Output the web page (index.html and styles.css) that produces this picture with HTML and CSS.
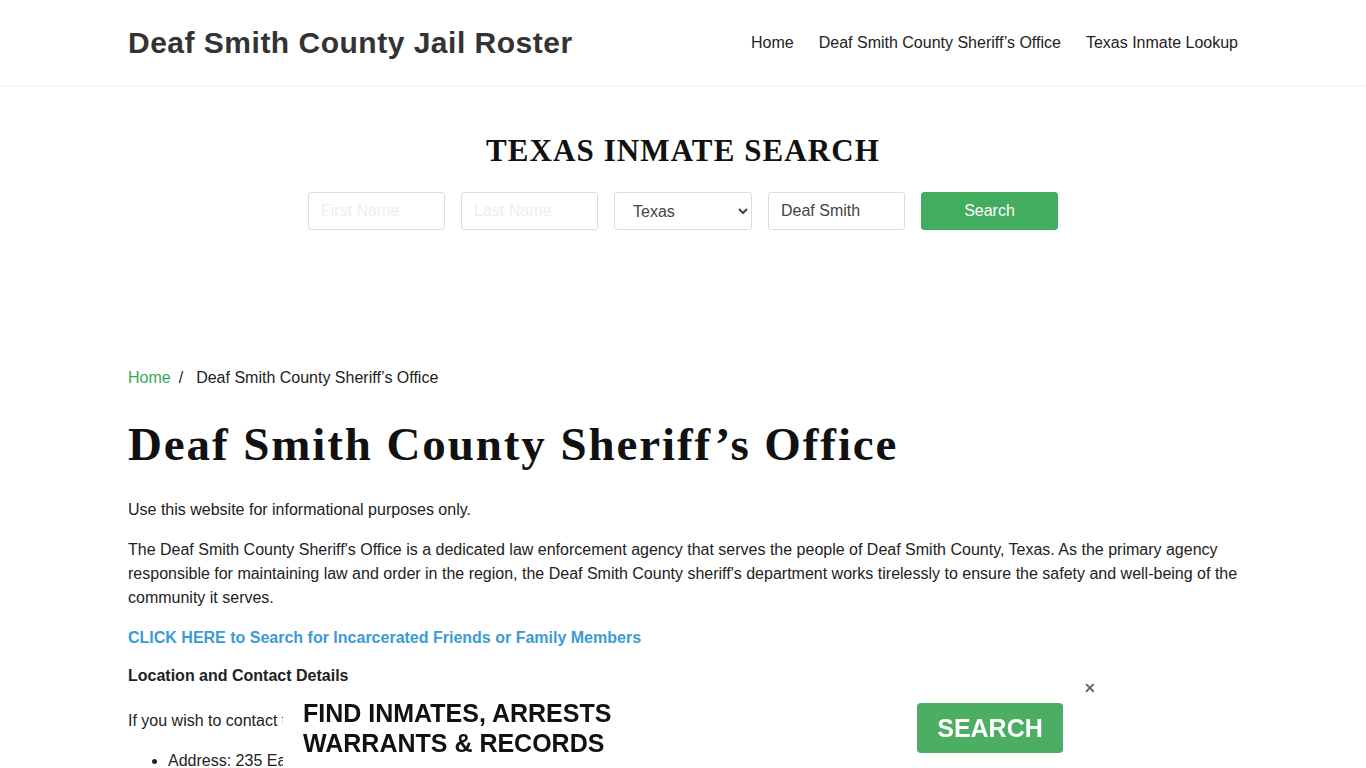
FILE: index.html
```html
<html>
<head>
  <meta charset="utf-8">
  <title>Deaf Smith County Sheriff's Office</title>
  <link rel="stylesheet" href="styles.css">
</head>
<body>
<div class="header">
  <div class="container header-inner">
    <a class="brand" href="#">Deaf Smith County Jail Roster</a>
    <div class="nav">
      <a href="#">Home</a>
      <a href="#">Deaf Smith County Sheriff’s Office</a>
      <a href="#">Texas Inmate Lookup</a>
    </div>
  </div>
</div>

<div class="search">
  <h2>TEXAS INMATE SEARCH</h2>
  <form class="search-form">
    <input type="text" placeholder="First Name">
    <input type="text" placeholder="Last Name">
    <select>
      <option>Texas</option>
    </select>
    <input type="text" value="Deaf Smith">
    <button type="button">Search</button>
  </form>
</div>

<div class="container content">
  <div class="crumbs"><a href="#">Home</a><span class="sep">/</span>Deaf Smith County Sheriff’s Office</div>
  <h1>Deaf Smith County Sheriff’s Office</h1>
  <p>Use this website for informational purposes only.</p>
  <p>The Deaf Smith County Sheriff's Office is a dedicated law enforcement agency that serves the people of Deaf Smith County, Texas. As the primary agency responsible for maintaining law and order in the region, the Deaf Smith County sheriff's department works tirelessly to ensure the safety and well-being of the community it serves.</p>
  <p class="cta-line"><a class="cta" href="#">CLICK HERE to Search for Incarcerated Friends or Family Members</a></p>
  <p><b>Location and Contact Details</b></p>
  <p class="contact">If you wish to contact the Deaf Smith County Sheriff's Office, you can use the following details:</p>
  <ul>
    <li>Address: 235 East 3rd Street, Hereford, TX 79045</li>
    <li>Phone: (806) 364-2311</li>
  </ul>
</div>

<div class="banner">
  <div class="banner-text">FIND INMATES, ARRESTS<br>WARRANTS &amp; RECORDS</div>
  <a class="banner-btn" href="#">SEARCH</a>
  <span class="close">&#x2715;</span>
</div>
</body>
</html>
```

FILE: styles.css
```css
body{
  margin: 0;
  background-color: #fff;
  font-family: "Liberation Sans", Arial, sans-serif;
  font-size: 16px;
  line-height: 24px;
  color: #222;
}
a{
  text-decoration: none;
}
.container{
  width: 1110px;
  margin: 0 auto;
}

/* header */
.header{
  border-bottom: 1px solid #f1f1f1;
}
.header-inner{
  height: 85px;
  display: flex;
  align-items: center;
  justify-content: space-between;
}
.brand{
  font-size: 30px;
  font-weight: bold;
  color: #333;
  letter-spacing: 0.5px;
}
.nav{
  display: flex;
  gap: 25px;
}
.nav a{
  color: #222;
  font-size: 16px;
}

/* search box */
.search{
  text-align: center;
  padding-top: 47px;
  height: 238px;
  box-sizing: border-box;
}
.search h2{
  margin: 0;
  font-family: "Liberation Serif", "Times New Roman", serif;
  font-size: 31px;
  line-height: 36px;
  letter-spacing: 1.1px;
  color: #111;
}
.search-form{
  margin-top: 23px;
  display: flex;
  justify-content: center;
  gap: 16px;
}
.search-form input,
.search-form select,
.search-form button{
  width: 137px;
  height: 38px;
  box-sizing: border-box;
  border: 1px solid #ddd;
  border-radius: 3px;
  font-family: "Liberation Sans", Arial, sans-serif;
  font-size: 16px;
  padding: 0 12px;
  color: #444;
  background: #fff;
}
.search-form select{
  width: 138px;
  padding-left: 14px;
}
.search-form input::placeholder{
  color: #eee;
}
.search-form button{
  background-color: #42ad5f;
  border-color: #42ad5f;
  color: #fff;
}

/* content */
.content{
  padding-top: 42px;
}
.crumbs{
  color: #222;
}
.crumbs a{
  color: #3aa757;
}
.crumbs .sep{
  padding: 0 13px 0 8px;
}
h1{
  font-family: "Liberation Serif", "Times New Roman", serif;
  font-size: 47px;
  line-height: 54px;
  letter-spacing: 1.9px;
  color: #111;
  margin: 27px 0 27px;
}
p{
  margin: 0 0 16px;
}
.cta-line{
  margin-bottom: 14px;
}
.cta{
  color: #3a9bd5;
  font-weight: bold;
}
.contact{
  margin-top: 21px;
}
ul{
  margin: 0;
  padding-left: 40px;
}

/* bottom banner */
.banner{
  position: fixed;
  bottom: 0;
  left: 283px;
  width: 800px;
  height: 78px;
  background: #fff;
  display: flex;
  align-items: center;
  justify-content: space-between;
  padding: 0 20px;
  box-sizing: border-box;
}
.banner-text{
  font-size: 25px;
  line-height: 30px;
  font-weight: bold;
  color: #111;
  margin-top: -2px;
}
.banner-btn{
  background-color: #4cae63;
  color: #fff;
  font-size: 25px;
  font-weight: bold;
  width: 146px;
  height: 50px;
  line-height: 50px;
  text-align: center;
  border-radius: 4px;
  margin-top: -2px;
}
.close{
  position: absolute;
  top: -9px;
  right: -13px;
  font-size: 14px;
  font-weight: bold;
  color: #666;
  line-height: 14px;
}
```
